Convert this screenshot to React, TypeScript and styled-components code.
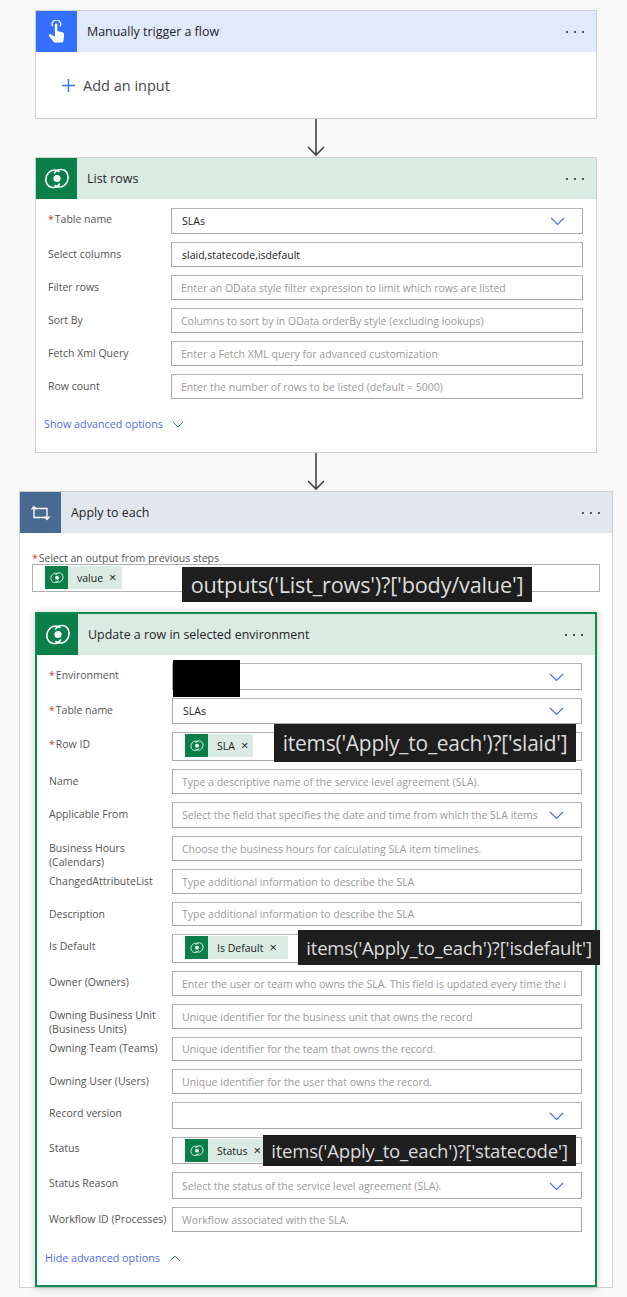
import React from 'react';
import styled, { createGlobalStyle } from 'styled-components';

const GlobalStyle = createGlobalStyle`
  html, body { margin: 0; padding: 0; background: #f8f8f8; overflow: hidden; }
  body { font-family: "Open Sans", "Noto Sans", sans-serif; }
`;

const Page = styled.div`
  width: 594px;
  height: 1297px;
  padding: 10px 0 0 19px;
  display: flex;
  flex-direction: column;
  align-items: center;
  overflow: hidden;
`;

const Card = styled.section<{ $wide?: boolean }>`
  width: ${p => (p.$wide ? '594px' : '562px')};
  box-sizing: border-box;
  flex-shrink: 0;
  background: #fff;
  border: 1px solid #d0d0d0;
`;

const ActiveCard = styled.section`
  width: 562px;
  height: 675px;
  margin: 20px 0 0 15px;
  box-sizing: border-box;
  background: #fff;
  border: 2px solid #0f8a50;
  box-shadow: 0 1px 8px rgba(0, 0, 0, 0.22);
`;

const Header = styled.header<{ $bg: string }>`
  height: 41px;
  display: flex;
  align-items: center;
  background: ${p => p.$bg};
`;

const Tile = styled.div<{ $bg: string }>`
  width: 41px;
  height: 41px;
  flex-shrink: 0;
  display: flex;
  align-items: center;
  justify-content: center;
  background: ${p => p.$bg};
`;

const Title = styled.h2`
  flex: 1;
  margin: 0 0 0 10px;
  font-size: 12.45px;
  font-weight: 400;
  color: #252525;
`;

const More = styled.svg`
  width: 20px;
  height: 4px;
  margin-right: 11px;
`;

const AddInput = styled.div`
  height: 66px;
  display: flex;
  align-items: center;
  gap: 8px;
  padding-left: 26px;
  font-size: 14.5px;
  color: #484848;
`;

const Fields = styled.div<{ $top: number }>`
  display: flex;
  flex-direction: column;
  gap: 8px;
  padding: ${p => p.$top}px 13px 0 12px;
`;

const Row = styled.div<{ $h: number }>`
  height: ${p => p.$h}px;
  display: grid;
  grid-template-columns: 123px 1fr;
  grid-template-rows: minmax(0, 1fr);
  position: relative;
`;

const Label = styled.label<{ $tight?: boolean }>`
  padding-top: ${p => (p.$tight ? 4 : 5)}px;
  font-size: 10.5px;
  line-height: 14px;
  color: #555;
  white-space: pre-line;
`;

const Star = styled.span`
  color: #d13438;
  margin-right: 1px;
`;

const Chip = styled.span`
  display: inline-flex;
  align-items: center;
  flex-shrink: 0;
  height: 23px;
  padding-right: 5px;
  background: #dbeae3;
  font-size: 10.5px;
  color: #222;
`;

const Input = styled.div<{ $filled?: boolean }>`
  box-sizing: border-box;
  display: flex;
  align-items: center;
  min-width: 0;
  padding: 0 38px 0 ${p => (p.$filled ? 10 : 9)}px;
  background: #fff;
  border: 1px solid #a8a8a8;
  border-top-color: #b4b4b4;
  position: relative;
  font-size: 10.5px;
  white-space: nowrap;
  overflow: hidden;
  color: ${p => (p.$filled ? '#222' : '#9a9a9a')};

  ${Chip} {
    align-self: flex-start;
    margin: 1px 0 0 2px;
  }
`;

const Chevron = styled.svg`
  position: absolute;
  right: 17px;
  top: 50%;
  margin-top: -4px;
  width: 15px;
  height: 9px;
`;

const Toggle = styled.div<{ $left: number; $top: number }>`
  display: flex;
  align-items: center;
  gap: 9px;
  margin: ${p => p.$top}px 0 0 ${p => p.$left}px;
  font-size: 10.75px;
  color: #4f6bed;
`;

const ToggleIcon = styled.svg`
  width: 12px;
  height: 7px;
`;

const Spacer = styled.div`
  height: 21px;
`;

const Arrow = styled.svg`
  width: 20px;
  height: 38px;
  flex-shrink: 0;
  display: block;
`;

const OutputBlock = styled.div`
  padding: 19px 12px 0 12px;
`;

const OutputLabel = styled.div`
  font-size: 10.5px;
  line-height: 12px;
  color: #555;
`;

const OutputField = styled.div`
  position: relative;
  box-sizing: border-box;
  display: flex;
  align-items: flex-start;
  height: 28px;
  padding: 1px 0 0 12px;
  border: 1px solid #b0b0b0;
`;

const ChipTile = styled.span`
  width: 23px;
  height: 23px;
  margin-right: 9px;
  display: flex;
  align-items: center;
  justify-content: center;
  background: #0a7f4a;
`;

const ChipClose = styled.span`
  margin-left: 6px;
  font-size: 13px;
  line-height: 1;
`;

const ChipSpacer = styled.span<{ $w: number }>`
  display: inline-block;
  width: ${p => p.$w}px;
`;

const CodeNote = styled.div<{ $left: number; $top: number; $w: number; $h: number; $size: number }>`
  position: absolute;
  left: ${p => p.$left}px;
  top: ${p => p.$top}px;
  width: ${p => p.$w}px;
  height: ${p => p.$h}px;
  display: flex;
  align-items: center;
  justify-content: center;
  background: #1e1e1e;
  color: #dcdcdc;
  font-size: ${p => p.$size}px;
  letter-spacing: -0.2px;
  white-space: nowrap;
  z-index: 2;
`;

const Redacted = styled.div`
  position: absolute;
  left: 124px;
  top: -3px;
  width: 67px;
  height: 37px;
  background: #000;
  z-index: 2;
`;

const Dataverse = ({ size }: { size: number }) => (
  <svg width={size} height={size * 0.81} viewBox="0 0 26 21" fill="none" stroke="#fff" strokeWidth="1.6" strokeLinecap="round">
    <path d="M15 3.500C11 .5 5 2 2.500 8 .5 13 3 19 8.500 19.500c3 .2 5.500-1 7-3.500" />
    <path d="M11 17.500c4 3 10 1.500 12.500-4.500 2-5-.5-11-6-11.500-3-.2-5.500 1-7 3.500" />
    <circle cx="13" cy="10.500" r="3.600" fill="#fff" stroke="none" />
  </svg>
);

const HandIcon = () => (
  <svg width="18" height="24" viewBox="0 0 20 27" fill="#fff">
    <path d="M5.200 7.200a4.800 4.800 0 1 1 8.200 0" fill="none" stroke="#fff" strokeWidth="1.400" />
    <path d="M7.600 5.200c0-1.700 2.800-1.700 2.800 0v7.200l5.400 1.500c1.600.4 2.400 1.400 2.200 3l-.8 6.600c-.1 1.200-.9 1.900-2.100 1.900H8.200c-.9 0-1.500-.3-2-1l-5-6.200c-1.100-1.600.8-3.100 2.200-2l4.200 2.600V5.200z" />
  </svg>
);

const LoopIcon = () => (
  <svg width="21" height="16" viewBox="0 0 20 16" fill="none" stroke="#fff" strokeWidth="1.300">
    <path d="M1 4.500L3.500 1.600 6 4.500M3.500 2v10.500H16M14 11.500l2.500 2.900 2.500-2.900M16.500 14V3.500H4" />
  </svg>
);

const MoreDots = () => (
  <More viewBox="0 0 20 4" fill="#333">
    <circle cx="2" cy="2" r="1.100" />
    <circle cx="10" cy="2" r="1.100" />
    <circle cx="18" cy="2" r="1.100" />
  </More>
);

const DownChevron = () => (
  <Chevron viewBox="0 0 15 9" fill="none" stroke="#4f6bed" strokeWidth="1.200">
    <path d="M1 1l6.500 6.500L14 1" />
  </Chevron>
);

const DownArrow = () => (
  <Arrow viewBox="0 0 20 38" fill="none" stroke="#444" strokeWidth="1.600">
    <path d="M10 0v36M2 28l8 8 8-8" />
  </Arrow>
);

type ChipSpec = { name: string; spacer?: number };
type NoteSpec = { text: string; left: number; top: number; w: number; h: number; size: number };
type FieldSpec = {
  label: string;
  required?: boolean;
  tight?: boolean;
  h?: number;
  value?: string;
  placeholder?: string;
  select?: boolean;
  chip?: ChipSpec;
  note?: NoteSpec;
  redacted?: boolean;
};

const listFields: FieldSpec[] = [
  { label: 'Table name', required: true, tight: true, h: 26, value: 'SLAs', select: true },
  { label: 'Select columns', value: 'slaid,statecode,isdefault' },
  { label: 'Filter rows', placeholder: 'Enter an OData style filter expression to limit which rows are listed' },
  { label: 'Sort By', placeholder: 'Columns to sort by in OData orderBy style (excluding lookups)' },
  { label: 'Fetch Xml Query', placeholder: 'Enter a Fetch XML query for advanced customization' },
  { label: 'Row count', placeholder: 'Enter the number of rows to be listed (default = 5000)' },
];

const updateFields: FieldSpec[] = [
  { label: 'Environment', required: true, h: 27, select: true, redacted: true },
  { label: 'Table name', required: true, h: 26, value: 'SLAs', select: true },
  {
    label: 'Row ID', required: true, h: 29, chip: { name: 'SLA' },
    note: { text: "items('Apply_to_each')?['slaid']", left: 225, top: -8, w: 302, h: 38, size: 20.9 },
  },
  { label: 'Name', placeholder: 'Type a descriptive name of the service level agreement (SLA).' },
  { label: 'Applicable From', h: 26, select: true, placeholder: 'Select the field that specifies the date and time from which the SLA items' },
  { label: 'Business Hours\n(Calendars)', placeholder: 'Choose the business hours for calculating SLA item timelines.' },
  { label: 'ChangedAttributeList', placeholder: 'Type additional information to describe the SLA' },
  { label: 'Description', h: 24, placeholder: 'Type additional information to describe the SLA' },
  {
    label: 'Is Default', h: 29, chip: { name: 'Is Default', spacer: 6 },
    note: { text: "items('Apply_to_each')?['isdefault']", left: 249, top: -4, w: 302, h: 35, size: 18.55 },
  },
  { label: 'Owner (Owners)', tight: true, placeholder: 'Enter the user or team who owns the SLA. This field is updated every time the i' },
  { label: 'Owning Business Unit\n(Business Units)', tight: true, placeholder: 'Unique identifier for the business unit that owns the record' },
  { label: 'Owning Team (Teams)', tight: true, h: 24, placeholder: 'Unique identifier for the team that owns the record.' },
  { label: 'Owning User (Users)', placeholder: 'Unique identifier for the user that owns the record.' },
  { label: 'Record version', tight: true, h: 27, select: true },
  {
    label: 'Status', tight: true, h: 27, chip: { name: 'Status' },
    note: { text: "items('Apply_to_each')?['statecode']", left: 214, top: -2, w: 313, h: 31, size: 18.6 },
  },
  { label: 'Status Reason', tight: true, h: 27, select: true, placeholder: 'Select the status of the service level agreement (SLA).' },
  { label: 'Workflow ID (Processes)', placeholder: 'Workflow associated with the SLA.' },
];

const ChipView = ({ name, spacer }: ChipSpec) => (
  <Chip>
    <ChipTile>
      <Dataverse size={14} />
    </ChipTile>
    {name}
    <ChipClose>×</ChipClose>
    {spacer ? <ChipSpacer $w={spacer} /> : null}
  </Chip>
);

const FieldRow = ({ field }: { field: FieldSpec }) => (
  <Row $h={field.h ?? 25}>
    <Label $tight={field.tight}>
      {field.required ? <Star>*</Star> : null}
      {field.label}
    </Label>
    <Input $filled={!!field.value || !!field.chip}>
      {field.chip ? <ChipView {...field.chip} /> : field.value ?? field.placeholder}
      {field.select ? <DownChevron /> : null}
    </Input>
    {field.redacted ? <Redacted /> : null}
    {field.note ? (
      <CodeNote $left={field.note.left} $top={field.note.top} $w={field.note.w} $h={field.note.h} $size={field.note.size}>
        {field.note.text}
      </CodeNote>
    ) : null}
  </Row>
);

const App = () => (
  <>
    <GlobalStyle />
    <Page>
      <Card>
        <Header $bg="#e1e9fd">
          <Tile $bg="#3370ff">
            <HandIcon />
          </Tile>
          <Title>Manually trigger a flow</Title>
          <MoreDots />
        </Header>
        <AddInput>
          <svg width="13" height="13" viewBox="0 0 13 13" stroke="#3370ff" strokeWidth="1.400">
            <path d="M6.500 0v13M0 6.500h13" />
          </svg>
          Add an input
        </AddInput>
      </Card>

      <DownArrow />

      <Card>
        <Header $bg="#dbeae3">
          <Tile $bg="#0a7f4a">
            <Dataverse size={26} />
          </Tile>
          <Title>List rows</Title>
          <MoreDots />
        </Header>
        <Fields $top={9}>
          {listFields.map(f => (
            <FieldRow key={f.label} field={f} />
          ))}
        </Fields>
        <Toggle $left={8} $top={18}>
          Show advanced options
          <ToggleIcon viewBox="0 0 12 7" fill="none" stroke="#4f6bed" strokeWidth="1">
            <path d="M1 1l5 5 5-5" />
          </ToggleIcon>
        </Toggle>
        <Spacer />
      </Card>

      <DownArrow />

      <Card $wide>
        <Header $bg="#e2e6ef">
          <Tile $bg="#486991">
            <LoopIcon />
          </Tile>
          <Title>Apply to each</Title>
          <MoreDots />
        </Header>
        <OutputBlock>
          <OutputLabel>
            <Star>*</Star>Select an output from previous steps
          </OutputLabel>
          <OutputField>
            <ChipView name="value" />
            <CodeNote $left={149} $top={2} $w={350} $h={35} $size={21.7}>
              outputs('List_rows')?['body/value']
            </CodeNote>
          </OutputField>
        </OutputBlock>
        <ActiveCard>
          <Header $bg="#dbeae3">
            <Tile $bg="#0a7f4a">
              <Dataverse size={26} />
            </Tile>
            <Title>Update a row in selected environment</Title>
            <MoreDots />
          </Header>
          <Fields $top={8}>
            {updateFields.map(f => (
              <FieldRow key={f.label} field={f} />
            ))}
          </Fields>
          <Toggle $left={8} $top={19}>
            Hide advanced options
            <ToggleIcon viewBox="0 0 12 7" fill="none" stroke="#4f6bed" strokeWidth="1">
              <path d="M1 6l5-5 5 5" />
            </ToggleIcon>
          </Toggle>
        </ActiveCard>
      </Card>
    </Page>
  </>
);

export default App;
